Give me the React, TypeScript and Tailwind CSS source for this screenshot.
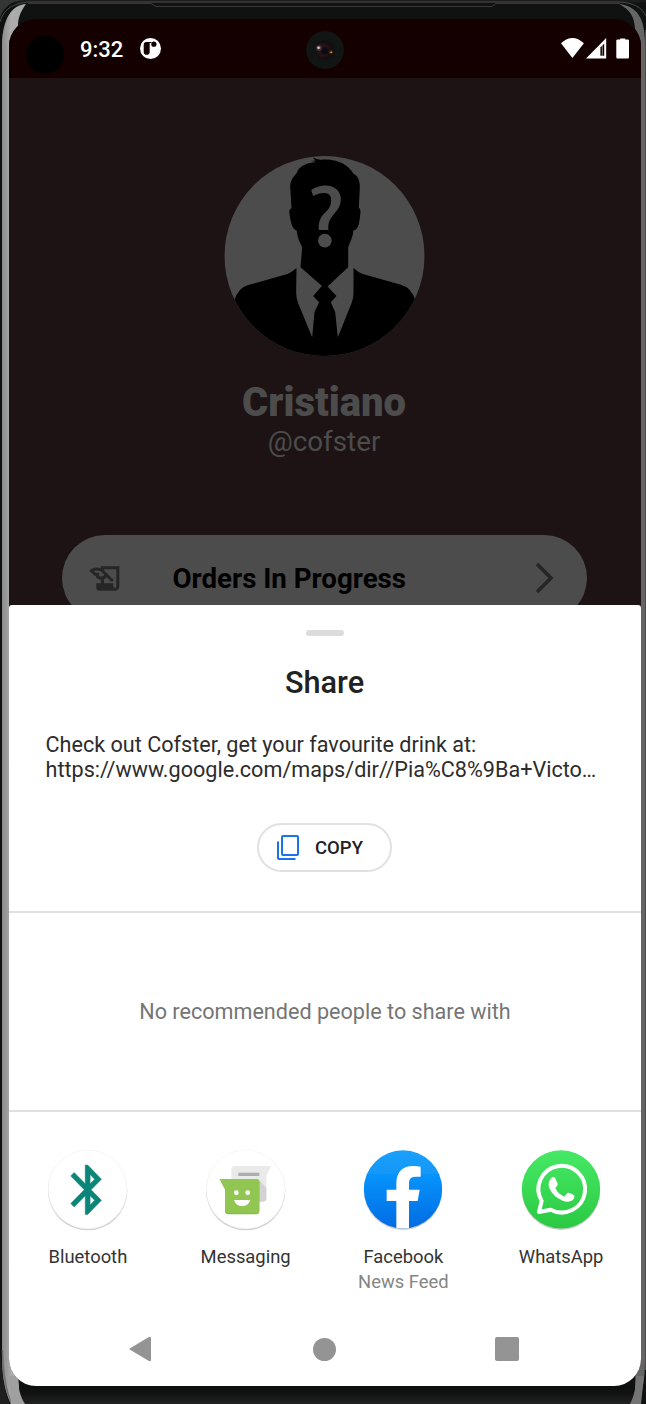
import React from "react";
import { MdHistoryEdu } from "react-icons/md";

function PhoneFrame() {
  return (
    <svg className="absolute inset-0" width="646" height="1404" viewBox="0 0 646 1404" aria-hidden="true">
      <defs>
        <linearGradient id="leftRim" x1="0" x2="1" y1="0" y2="0">
          <stop offset="0" stopColor="#8c8c8c" />
          <stop offset="0.4" stopColor="#adadad" />
          <stop offset="1" stopColor="#a6a6a6" />
        </linearGradient>
        <linearGradient id="bottomEdge" x1="0" x2="0" y1="0" y2="1">
          <stop offset="0" stopColor="#0c0d0d" />
          <stop offset="0.4" stopColor="#111212" />
          <stop offset="1" stopColor="#222222" />
        </linearGradient>
      </defs>
      <rect width="646" height="1404" fill="#0f1010" />
      <path d="M0 0H646V18H0Z" fill="#101111" />
      <rect x="0" y="0" width="646" height="2.5" fill="#1c1c1c" />
      <path d="M0 22C3 10 12 3 30 2H616C634 2 642 8 646 16" fill="none" stroke="#4a4a4a" strokeWidth="1" />
      <path d="M0 17C4 8 10 1 24 0H0Z" fill="#343434" />
      <path d="M28 3.5H151L156 6.5H492L496 3.5H620" fill="none" stroke="#383838" strokeWidth="1" />
      <path d="M2 1404V44C3 18 12 5 26 4C21 11 18 17 18 26V1370C18 1385 20 1396 25 1404H11C5 1392 2 1378 2 1358Z" fill="url(#leftRim)" />
      <path d="M0 1340C1 1370 3 1388 10 1404H0Z" fill="#1f1f1f" />
      <path d="M2.5 1350C3 1376 6 1392 12 1404" fill="none" stroke="#6f6f6f" strokeWidth="1.5" />
      <path d="M619 4C637 6 645 18 645 43V1362C645 1380 642 1394 637 1404H631C635 1394 636 1384 635 1370V28C634 16 630 10 619 4Z" fill="#656565" />
      <path d="M645.5 30V1370" stroke="#4a4a4a" strokeWidth="1" />
      <rect x="19" y="1386" width="616" height="18" fill="url(#bottomEdge)" />
      <path d="M18 1376C18 1388 20 1396 25 1404H11L9 1376Z" fill="#a0a0a0" />
      <path d="M636 1376C636 1388 634 1396 630 1404H641L644 1376Z" fill="#747474" />
    </svg>
  );
}

function StatusBar() {
  return (
    <div className="flex h-[59px] items-center bg-[#150000]">
      <svg className="ml-[17px] mt-[13px] shrink-0" width="39" height="39" viewBox="0 0 39 39">
        <circle cx="19.2" cy="18.8" r="19" fill="#000" />
      </svg>
      <span className="ml-[15px] mt-[2px] w-[43px] whitespace-nowrap text-[22px] font-medium leading-[26px] text-white">9:32</span>
      <svg className="ml-[17px] shrink-0" width="22" height="22" viewBox="0.5 0.5 22 22">
        <circle cx="11" cy="11" r="10.5" fill="#fff" />
        <path d="M4.2 7.4Q4.2 4.6 7.1 4.6H12V5.6H10.2V14.4Q10.2 17.2 7.2 17.2Q4.2 17.2 4.2 14.4Z" fill="#150000" />
        <circle cx="14.4" cy="6.7" r="2.6" fill="#150000" />
      </svg>
      <svg className="ml-[144px] mt-[3px] shrink-0" width="38" height="38" viewBox="0 0 38 38">
        <circle cx="19" cy="19" r="19" fill="#111513" />
        <circle cx="19" cy="19" r="9.8" fill="#140f12" />
        <circle cx="17" cy="19" r="7" fill="#241316" />
        <circle cx="19" cy="20" r="3.5" fill="#0c0b12" />
        <circle cx="13" cy="17" r="2.8" fill="#4d3442" />
        <circle cx="12.6" cy="16.7" r="1.3" fill="#c4d0c8" />
        <circle cx="25" cy="21.3" r="2" fill="#452709" />
        <circle cx="25.1" cy="21.3" r="0.8" fill="#ffc45f" />
      </svg>
      <svg className="ml-auto mr-[11px] mt-[-1px] shrink-0" width="70" height="22" viewBox="560 37 70 22">
        <path d="M561 43.2Q572.4 32.8 583.9 43.2L572.4 58Z" fill="#fff" />
        <path d="M606.2 38V58.5H586Z" fill="#fff" />
        <path d="M600.4 47.4L604.2 43.6V55.8H600.4Z" fill="#150000" />
        <path d="M602.3 45V55.8" stroke="#fff" strokeWidth="0.5" />
        <path d="M617.5 39.6H620.2V38.4H625.2V39.6H627.8Q629 39.6 629 40.8V57.2Q629 58.6 627.8 58.6H617.5Q616.3 58.6 616.3 57.2V40.8Q616.3 39.6 617.5 39.6Z" fill="#fff" />
      </svg>
    </div>
  );
}

function Avatar() {
  return (
    <svg width="201" height="200" viewBox="42 48 602 600" className="shrink-0">
      <defs>
        <clipPath id="avatarClip">
          <circle cx="343" cy="348" r="300" />
        </clipPath>
      </defs>
      <g clipPath="url(#avatarClip)">
        <rect x="42" y="48" width="602" height="602" fill="#4c4c4c" />
        <path
          d="M244 205L240 138C242 118 252 108 259 100C266 78 290 68 318 67L302 62L316 62L308 52Q320 60 334 59C378 55 412 72 430 101C444 108 449 122 449 142L446 204Q453 206 450 224C448 248 444 270 430 271C428 292 420 306 414 322V382L345 446L271 382L276 322C268 306 262 292 259 271C246 268 242 248 238 222Q235 207 244 205Z"
          fill="#000"
        />
        <path d="M259 384Q245 396 232 402L112 436Q84 444 72 482V650H616V482Q604 442 572 434L458 402Q442 396 430 384V460Q430 476 424 490L383 592L375 516L362 487L379 468L353 440L345 432L333 440L309 468L327 487L313 516L306 592L264 490Q258 474 258 460Z" fill="#000" />
        <path d="M303 150C336 126 392 132 392 178C392 220 350 224 355 270H326C322 214 363 222 363 180C363 152 332 156 309 168Z" fill="#4c4c4c" />
        <circle cx="344" cy="302" r="20.5" fill="#4c4c4c" />
      </g>
    </svg>
  );
}

function ProfileScreen() {
  return (
    <div className="flex h-[527px] flex-col items-center overflow-hidden bg-[#1d1314] pr-[2px] pt-[78px]">
      <Avatar />
      <h1 className="mt-[23px] text-[40px] font-black leading-[48px] text-[#4c4c4c]">Cristiano</h1>
      <p className="mt-[-1px] text-[27.8px] leading-[32px] text-[#4c4c4c]">@cofster</p>
      <button className="mt-[77px] flex h-[86px] w-[525px] shrink-0 items-center rounded-full bg-[#4c4c4c] pl-[25px] pr-[32px]">
        <MdHistoryEdu className="size-[37px] shrink-0 text-[#262626]" />
        <span className="ml-[49px] mt-[2px] whitespace-nowrap text-[27.7px] font-bold leading-[32px] text-black">Orders In Progress</span>
        <svg className="ml-auto shrink-0" width="20" height="32" viewBox="0 0 20 32">
          <path d="M2 2L16 16L2 30" fill="none" stroke="#262626" strokeWidth="3.6" />
        </svg>
      </button>
    </div>
  );
}

function BluetoothIcon() {
  return (
    <svg width="82" height="84" viewBox="50 42 246 252">
      <circle cx="172" cy="167" r="119" fill="#cccccc" />
      <circle cx="172" cy="163.5" r="119" fill="#f0f0f0" />
      <circle cx="172" cy="163" r="117" fill="#fff" />
      <path
        transform="translate(85 75.5) scale(7.25 7.4)"
        d="M17.71 7.71L12 2H11V9.59L6.41 5L5 6.41L10.59 12L5 17.59L6.41 19L11 14.41V22H12L17.71 16.29L13.41 12L17.71 7.71ZM13 5.83L14.88 7.71L13 9.59V5.83ZM14.88 16.29L13 18.17V14.41L14.88 16.29Z"
        fill="#0b8577"
        stroke="#0b8577"
        strokeWidth="0.2"
      />
    </svg>
  );
}

function MessagingIcon() {
  return (
    <svg width="82" height="84" viewBox="524 42 246 252">
      <circle cx="646" cy="167" r="119" fill="#cccccc" />
      <circle cx="646" cy="163.5" r="119" fill="#f0f0f0" />
      <circle cx="646" cy="163" r="117" fill="#fff" />
      <path d="M612 93H723L708 122V190Q708 200 698 200H612Q603 200 603 190V102Q603 93 612 93Z" fill="#eaeaea" />
      <path d="M686 135L708 158V190Q708 200 698 200H686Z" fill="#d3d3d3" />
      <rect x="624" y="113" width="63" height="10" fill="#adadad" />
      <path d="M568 133H678Q687 133 687 142V228Q687 238 677 238H594Q584 238 584 228V163Z" fill="#85b847" />
      <path d="M568 132H678Q687 132 687 141V225Q687 235 677 235H594Q584 235 584 225V162Z" fill="#91c653" />
      <circle cx="618" cy="173" r="7" fill="#fff" />
      <circle cx="652" cy="173" r="7" fill="#fff" />
      <path d="M611 195H660Q654 213 635.5 213Q617 213 611 195Z" fill="#fff" />
    </svg>
  );
}

function FacebookIcon() {
  return (
    <svg width="82" height="84" viewBox="69 42 246 252">
      <defs>
        <linearGradient id="fb" x1="0" x2="0" y1="0" y2="1">
          <stop offset="0" stopColor="#1aa0fb" />
          <stop offset="0.3" stopColor="#1597f8" />
          <stop offset="0.31" stopColor="#0694fb" />
          <stop offset="1" stopColor="#016be3" />
        </linearGradient>
        <clipPath id="fbClip">
          <circle cx="192" cy="163" r="117.5" />
        </clipPath>
      </defs>
      <circle cx="192" cy="168" r="117" fill="#cbcbcb" />
      <circle cx="192" cy="163" r="117.5" fill="url(#fb)" />
      <path clipPath="url(#fbClip)" d="M172 284V198H143V164H172V145C172 108 194 93 221 93Q234 93 245 95V125H230C214 125 210 134 210 146V164H242L236 198H210V284Z" fill="#fff" />
    </svg>
  );
}

function WhatsAppIcon() {
  return (
    <svg width="82" height="84" viewBox="542 42 246 252">
      <defs>
        <linearGradient id="wa" x1="0" x2="0" y1="0" y2="1">
          <stop offset="0" stopColor="#46e965" />
          <stop offset="1" stopColor="#2bc942" />
        </linearGradient>
      </defs>
      <circle cx="665" cy="168" r="117" fill="#cbcbcb" />
      <circle cx="665" cy="163" r="117.5" fill="url(#wa)" />
      <path d="M599 231L607 198A70 70 0 1 1 634 224Z" fill="none" stroke="#fff" strokeWidth="12" strokeLinejoin="round" />
      <path d="M638 127Q643 125 647 128L655 146Q656 150 648 159Q656 177 675 185L684 174Q687 172 691 174L705 181Q707 190 700 196Q687 204 670 197Q642 186 630 160Q623 139 638 127Z" fill="#fff" />
    </svg>
  );
}

const apps = [
  { name: "Bluetooth", Icon: BluetoothIcon },
  { name: "Messaging", Icon: MessagingIcon },
  { name: "Facebook", detail: "News Feed", Icon: FacebookIcon },
  { name: "WhatsApp", Icon: WhatsAppIcon },
];

function ShareSheet() {
  return (
    <section className="flex h-[781px] flex-col rounded-t-[3px] bg-white text-[#212121]">
      <div className="ml-[296.5px] mt-[25px] h-[6px] w-[38px] shrink-0 rounded-full bg-[#dcdcdc]" />
      <h2 className="mt-[27px] pr-[1px] text-center text-[30.7px] font-medium leading-[40px]">Share</h2>
      <div className="mt-[29px] whitespace-nowrap pl-[36.5px] text-[21.6px] leading-[25px] text-[#2c2c2c]">
        <p>Check out Cofster, get your favourite drink at:</p>
        <p>https://www.google.com/maps/dir//Pia%C8%9Ba+Victo…</p>
      </div>
      <button className="ml-[248px] mt-[41px] flex h-[49px] w-[135px] shrink-0 items-center rounded-full border-2 border-[#e1e1e1]">
        <svg className="ml-[17px] shrink-0" width="24" height="27" viewBox="0 0 24 27">
          <rect x="6" y="2" width="16" height="19" rx="1" fill="none" stroke="#1a73e8" strokeWidth="2" />
          <path d="M2 7.5V24Q2 25 3 25H19.5" fill="none" stroke="#1a73e8" strokeWidth="2" />
        </svg>
        <span className="ml-[15px] text-[18.5px] font-medium leading-[24px]">COPY</span>
      </button>
      <hr className="mt-[39px] h-[2px] shrink-0 border-0 bg-[#e0e0e0]" />
      <div className="flex h-[197px] shrink-0 items-center justify-center pt-[2px] text-[21.6px] text-[#757575]">
        No recommended people to share with
      </div>
      <hr className="h-[2px] shrink-0 border-0 bg-[#e0e0e0]" />
      <div className="mt-[37px] grid grid-cols-4 pr-[1px]">
        {apps.map(({ name, detail, Icon }) => (
          <div key={name} className="flex h-[150px] flex-col items-center">
            <Icon />
            <span className="mt-[12px] text-[18.4px] leading-[24px] text-[#333]">{name}</span>
            {detail && <span className="text-[18.4px] leading-[26px] text-[#858585]">{detail}</span>}
          </div>
        ))}
      </div>
      <nav className="mt-[37px] flex h-[26px] items-center pl-[120px] pr-[122px]">
        <svg width="23" height="26" viewBox="0 0 23 26">
          <path d="M1.5 12L19.5 1.2Q22 0 22 2V24Q22 26 19.5 24.8L1.5 14Q-.5 13 1.5 12Z" fill="#949494" />
        </svg>
        <span className="ml-[161px] size-[23px] rounded-full bg-[#949494]" />
        <span className="ml-auto size-[24px] rounded-[2px] bg-[#949494]" />
      </nav>
    </section>
  );
}

export default function App() {
  return (
    <main className="relative h-[1404px] w-[646px] overflow-hidden font-['Roboto',sans-serif]">
      <PhoneFrame />
      <div className="relative ml-[9px] h-[1404px] w-[632px] pt-[19px]">
        <div className="h-[1367px] overflow-hidden rounded-[27px] bg-[#1d1314]">
          <StatusBar />
          <ProfileScreen />
          <ShareSheet />
        </div>
      </div>
    </main>
  );
}
